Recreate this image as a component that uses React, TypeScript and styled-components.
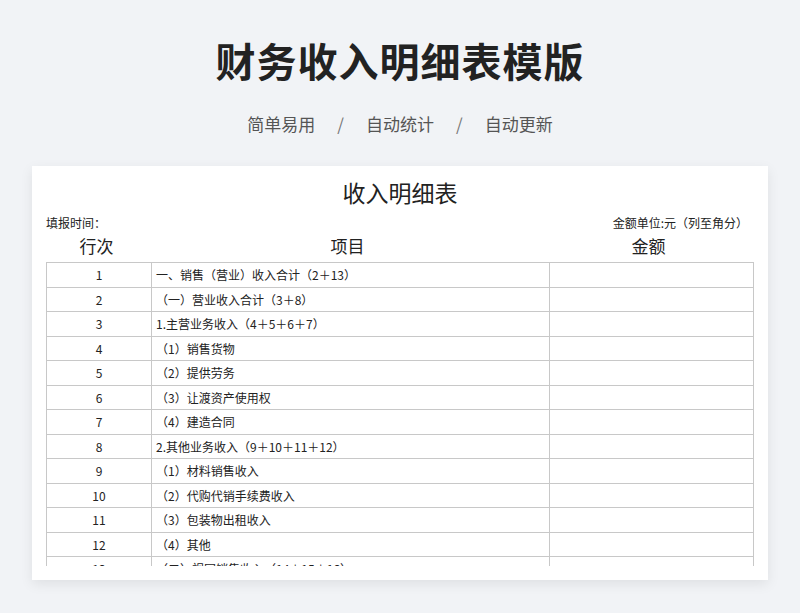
import React from "react";
import styled, { createGlobalStyle } from "styled-components";

const Global = createGlobalStyle`
  body { margin: 0; background: #f1f3f6; font-family: "Noto Sans CJK SC", sans-serif; }
`;

const rows: [string, string][] = [
  ["1", "一、销售（营业）收入合计（2＋13）"],
  ["2", "（一）营业收入合计（3＋8）"],
  ["3", "1.主营业务收入（4＋5＋6＋7）"],
  ["4", "（1）销售货物"],
  ["5", "（2）提供劳务"],
  ["6", "（3）让渡资产使用权"],
  ["7", "（4）建造合同"],
  ["8", "2.其他业务收入（9＋10＋11＋12）"],
  ["9", "（1）材料销售收入"],
  ["10", "（2）代购代销手续费收入"],
  ["11", "（3）包装物出租收入"],
  ["12", "（4）其他"],
  ["13", "（二）视同销售收入（14＋15＋16）"],
];

const App = () => (
  <>
    <Global />
    <Page>
      <Title>财务收入明细表模版</Title>
      <Sub>
        <span>简单易用</span><Slash>/</Slash><span>自动统计</span><Slash>/</Slash><span>自动更新</span>
      </Sub>
      <Card>
        <SheetTitle>收入明细表</SheetTitle>
        <Meta>
          <span>填报时间：</span>
          <span>金额单位:元（列至角分）</span>
        </Meta>
        <Head>
          <span>行次</span>
          <span>项目</span>
          <span>金额</span>
        </Head>
        <Clip>
          <Table>
            <tbody>
              {rows.map(([n, t]) => (
                <tr key={n}>
                  <Num>{n}</Num>
                  <Item>{t}</Item>
                  <Amt />
                </tr>
              ))}
            </tbody>
          </Table>
        </Clip>
      </Card>
    </Page>
  </>
);

const Page = styled.div`
  display: flex;
  flex-direction: column;
  align-items: center;
  height: 613px;
  overflow: hidden;
`;
const Title = styled.h1`
  margin: 30px 0 0;
  font-size: 40px;
  line-height: 60px;
  font-weight: 700;
  color: #222;
  letter-spacing: 1px;
`;
const Sub = styled.div`
  margin-top: 20px;
  display: flex;
  gap: 22px;
  font-size: 17px;
  color: #555;
  line-height: 28px;
`;
const Slash = styled.span`
  color: #777;
`;
const Card = styled.div`
  margin-top: 28px;
  width: 736px;
  height: 414px;
  background: #fff;
  box-shadow: 0 4px 12px rgba(0, 0, 0, 0.08);
  padding: 0 14px;
  box-sizing: border-box;
  display: flex;
  flex-direction: column;
`;
const SheetTitle = styled.div`
  text-align: center;
  font-size: 23px;
  color: #222;
  margin-top: 9px;
  line-height: 34px;
`;
const Meta = styled.div`
  display: flex;
  justify-content: space-between;
  font-size: 12px;
  color: #222;
  margin-top: 6px;
  line-height: 16px;
  padding-right: 6px;
`;
const Head = styled.div`
  display: grid;
  grid-template-columns: 105px 393px 209px;
  font-size: 17px;
  color: #222;
  line-height: 26px;
  margin-top: 2px;
  text-align: center;
  & span:first-child { margin-left: -4px; }
`;
const Clip = styled.div`
  margin-top: 3px;
  height: 304px;
  overflow: hidden;
`;
const Table = styled.table`
  width: 708px;
  border-collapse: collapse;
  table-layout: fixed;
  font-size: 12px;
  color: #222;
  td {
    border: 1px solid #c8c8c8;
    height: 23.5px;
    padding: 0;
  }
`;
const Num = styled.td`
  width: 104px;
  text-align: center;
`;
const Item = styled.td`
  width: 393px;
  padding-left: 4px !important;
`;
const Amt = styled.td``;

export default App;
